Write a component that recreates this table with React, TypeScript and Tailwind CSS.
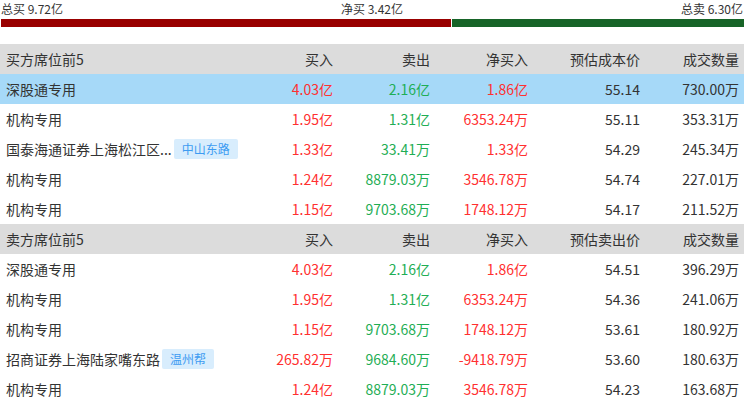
import React from "react";

type Row = {
  name: string;
  tag?: string;
  buy: string;
  sell: string;
  net: string;
  price: string;
  volume: string;
  active?: boolean;
};

const BUY_ROWS: Row[] = [
  { name: "深股通专用", buy: "4.03亿", sell: "2.16亿", net: "1.86亿", price: "55.14", volume: "730.00万", active: true },
  { name: "机构专用", buy: "1.95亿", sell: "1.31亿", net: "6353.24万", price: "55.11", volume: "353.31万" },
  { name: "国泰海通证券上海松江区...", tag: "中山东路", buy: "1.33亿", sell: "33.41万", net: "1.33亿", price: "54.29", volume: "245.34万" },
  { name: "机构专用", buy: "1.24亿", sell: "8879.03万", net: "3546.78万", price: "54.74", volume: "227.01万" },
  { name: "机构专用", buy: "1.15亿", sell: "9703.68万", net: "1748.12万", price: "54.17", volume: "211.52万" },
];

const SELL_ROWS: Row[] = [
  { name: "深股通专用", buy: "4.03亿", sell: "2.16亿", net: "1.86亿", price: "54.51", volume: "396.29万" },
  { name: "机构专用", buy: "1.95亿", sell: "1.31亿", net: "6353.24万", price: "54.36", volume: "241.06万" },
  { name: "机构专用", buy: "1.15亿", sell: "9703.68万", net: "1748.12万", price: "53.61", volume: "180.92万" },
  { name: "招商证券上海陆家嘴东路", tag: "温州帮", buy: "265.82万", sell: "9684.60万", net: "-9418.79万", price: "53.60", volume: "180.63万" },
  { name: "机构专用", buy: "1.24亿", sell: "8879.03万", net: "3546.78万", price: "54.23", volume: "163.68万" },
];

const GRID = "grid grid-cols-[240px_98px_97px_98px_112px_99px] h-[30px] items-center leading-[30px]";

function Header({ title, priceLabel }: { title: string; priceLabel: string }) {
  return (
    <div className={`${GRID} bg-[#dcdcdc] text-[#333]`}>
      <div className="pl-[6px]">{title}</div>
      <div className="pr-[5px] text-right">买入</div>
      <div className="pr-[5px] text-right">卖出</div>
      <div className="pr-[5px] text-right">净买入</div>
      <div className="pr-[5px] text-right">{priceLabel}</div>
      <div className="pr-[5px] text-right">成交数量</div>
    </div>
  );
}

function TableRow({ row }: { row: Row }) {
  return (
    <div className={`${GRID} ${row.active ? "bg-[#a6d9f8]" : "bg-white"} text-[#333]`}>
      <div className="flex items-center pl-[6px] whitespace-nowrap">
        <span>{row.name}</span>
        {row.tag && (
          <span className="ml-[2px] h-[20px] rounded-[2px] bg-[#d8edfd] px-[8px] text-[12px] leading-[20px] text-[#3d9cf2]">
            {row.tag}
          </span>
        )}
      </div>
      <div className="pr-[5px] text-right text-[#ff3030]">{row.buy}</div>
      <div className="pr-[5px] text-right text-[#1fae55]">{row.sell}</div>
      <div className="pr-[5px] text-right text-[#ff3030]">{row.net}</div>
      <div className="pr-[5px] text-right">{row.price}</div>
      <div className="pr-[5px] text-right">{row.volume}</div>
    </div>
  );
}

export default function App() {
  return (
    <div className="w-[744px] h-[402px] overflow-hidden bg-white font-['Noto_Sans_CJK_SC',sans-serif] text-[14px]">
      <div className="flex h-[17px] items-center justify-between px-[1px] text-[12px] leading-[17px] text-[#333]">
        <span>总买 9.72亿</span>
        <span>净买 3.42亿</span>
        <span>总卖 6.30亿</span>
      </div>
      <div className="mt-[2px] flex h-[8px] gap-[1px] pl-[1px]">
        <div className="w-[450px] bg-[#990000]" />
        <div className="flex-1 bg-[#176428]" />
      </div>
      <div className="h-[17px]" />
      <Header title="买方席位前5" priceLabel="预估成本价" />
      {BUY_ROWS.map((row, i) => (
        <TableRow key={`b${i}`} row={row} />
      ))}
      <Header title="卖方席位前5" priceLabel="预估卖出价" />
      {SELL_ROWS.map((row, i) => (
        <TableRow key={`s${i}`} row={row} />
      ))}
    </div>
  );
}
